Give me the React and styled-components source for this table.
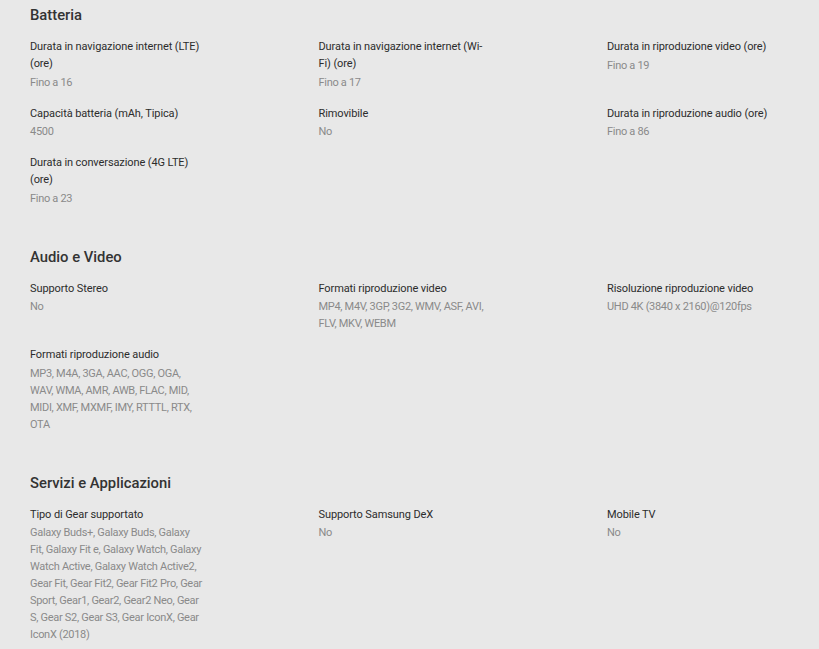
import React from 'react';
import styled, { createGlobalStyle } from 'styled-components';

const GlobalStyle = createGlobalStyle`
  html, body {
    margin: 0;
    padding: 0;
    background: #e8e8e8;
  }
  body {
    font-family: Roboto, "Liberation Sans", Arial, sans-serif;
    -webkit-font-smoothing: antialiased;
  }
`;

const Page = styled.div`
  padding: 5px 0 0 30px;
  min-height: 100vh;
  box-sizing: border-box;
`;

const Section = styled.section`
  padding-bottom: 40px;
`;

const SectionTitle = styled.h3`
  margin: 0 0 13px;
  font-size: 14.8px;
  line-height: 20px;
  font-weight: 500;
  color: #333333;
`;

const Grid = styled.div`
  display: grid;
  grid-template-columns: repeat(3, 288.5px);
  row-gap: 14px;
`;

const Item = styled.div`
  max-width: 174px;
`;

const Label = styled.div`
  font-size: 11px;
  line-height: 17px;
  font-weight: 400;
  letter-spacing: -0.1px;
  color: #2c2c2c;
`;

const Value = styled.div`
  margin-top: 1.5px;
  font-size: 11px;
  line-height: 17px;
  letter-spacing: -0.3px;
  color: #8a8a8a;
`;

const sections = [
  {
    title: 'Batteria',
    items: [
      ['Durata in navigazione internet (LTE) (ore)', 'Fino a 16'],
      ['Durata in navigazione internet (Wi-Fi) (ore)', 'Fino a 17'],
      ['Durata in riproduzione video (ore)', 'Fino a 19'],
      ['Capacità batteria (mAh, Tipica)', '4500'],
      ['Rimovibile', 'No'],
      ['Durata in riproduzione audio (ore)', 'Fino a 86'],
      ['Durata in conversazione (4G LTE) (ore)', 'Fino a 23'],
    ],
  },
  {
    title: 'Audio e Video',
    items: [
      ['Supporto Stereo', 'No'],
      ['Formati riproduzione video', 'MP4, M4V, 3GP, 3G2, WMV, ASF, AVI, FLV, MKV, WEBM'],
      ['Risoluzione riproduzione video', 'UHD 4K (3840 x 2160)@120fps'],
      [
        'Formati riproduzione audio',
        'MP3, M4A, 3GA, AAC, OGG, OGA, WAV, WMA, AMR, AWB, FLAC, MID, MIDI, XMF, MXMF, IMY, RTTTL, RTX, OTA',
      ],
    ],
  },
  {
    title: 'Servizi e Applicazioni',
    items: [
      [
        'Tipo di Gear supportato',
        'Galaxy Buds+, Galaxy Buds, Galaxy Fit, Galaxy Fit e, Galaxy Watch, Galaxy Watch Active, Galaxy Watch Active2, Gear Fit, Gear Fit2, Gear Fit2 Pro, Gear Sport, Gear1, Gear2, Gear2 Neo, Gear S, Gear S2, Gear S3, Gear IconX, Gear IconX (2018)',
      ],
      ['Supporto Samsung DeX', 'No'],
      ['Mobile TV', 'No'],
    ],
  },
];

const App = () => {
  return (
    <Page>
      <GlobalStyle />
      {sections.map((s) => (
        <Section key={s.title}>
          <SectionTitle>{s.title}</SectionTitle>
          <Grid>
            {s.items.map(([label, value]) => (
              <Item key={label}>
                <Label>{label}</Label>
                <Value>{value}</Value>
              </Item>
            ))}
          </Grid>
        </Section>
      ))}
    </Page>
  );
};

export default App;
